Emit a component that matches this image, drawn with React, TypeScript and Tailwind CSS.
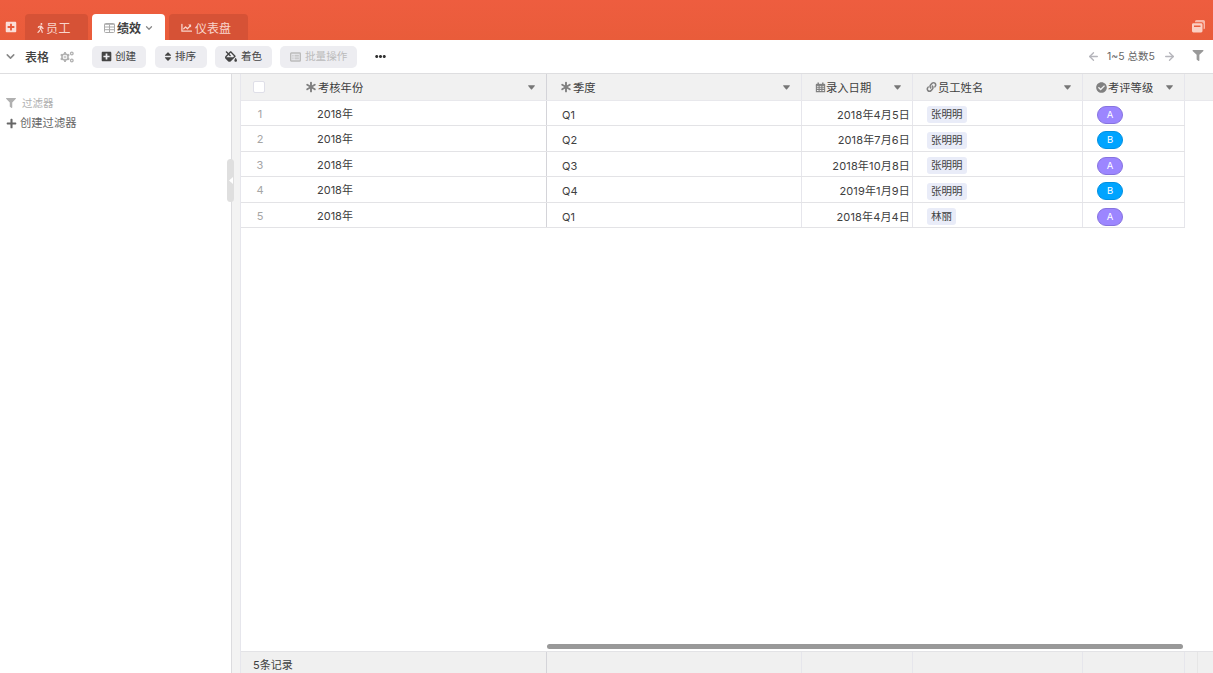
import React from 'react';
import clsx from 'clsx';
import {
  FaPlusSquare,
  FaWalking,
  FaSort,
  FaFillDrip,
  FaEllipsisH,
  FaFilter,
  FaPlus,
  FaLink,
  FaCheckCircle,
} from 'react-icons/fa';
import { FiArrowLeft, FiArrowRight, FiChevronDown } from 'react-icons/fi';

interface Column {
  id: string;
  title: string;
  icon: React.ReactNode;
  width: string;
}

interface ReviewRecord {
  year: string;
  quarter: string;
  date: string;
  employee: string;
  grade: 'A' | 'B';
}

const AsteriskIcon = () => (
  <svg viewBox="0 0 12 12" className="w-3 h-3 mr-px" stroke="currentColor" strokeWidth="1.9" strokeLinecap="round">
    <path d="M6 1.6V10.4M2.2 3.8L9.8 8.2M9.8 3.8L2.2 8.2" />
  </svg>
);

const CalendarIcon = () => (
  <svg viewBox="0 0 12 12" className="w-[11px] h-[11px]" fill="none" stroke="currentColor">
    <path d="M1.5 3.5h9v7h-9zM1 5.8h10M1 8h10M4.5 3v7.5M7.5 3v7.5" strokeWidth="1.2" />
    <path d="M1 3h10" strokeWidth="2" />
    <path d="M3.5 .5v2M8.5 .5v2" strokeWidth="1.6" />
  </svg>
);

const CaretIcon = () => (
  <svg viewBox="0 0 8 5" className="w-[7px] h-[5px] ml-auto mr-[11px] mt-0.5 text-[#777]" fill="currentColor">
    <path d="M.5 0h7q.6.2.2.8L4.4 4.7q-.4.4-.8 0L.3.8Q-.1.2.5 0z" />
  </svg>
);

const TableIcon = () => (
  <svg viewBox="0 0 11 10" className="w-[11px] h-[10px]" fill="none" stroke="currentColor">
    <rect x=".5" y=".5" width="10" height="9" rx="1" />
    <path d="M.5 1.3h10M.5 4h10M.5 6.7h10M5.5 1.5V9" />
  </svg>
);

const ChartIcon = () => (
  <svg viewBox="0 0 12 10" className="w-[11px] h-2.5" fill="none" stroke="currentColor" strokeWidth="1.4">
    <path d="M1 1v7.5h10.5M3 5.8l2-2 2 2 3.4-3.4" strokeLinecap="round" strokeLinejoin="round" />
    <path d="M7.8 1.3h3.2v3.2z" fill="currentColor" stroke="none" />
  </svg>
);

const GearsIcon = () => (
  <svg viewBox="0 0 14 12" className="w-3.5 h-3" fill="none" stroke="currentColor">
    <circle cx="5" cy="6" r="3.1" strokeWidth="1.5" />
    <circle cx="5" cy="6" r="1" strokeWidth=".8" />
    <path d="M5 1v2M5 9V11M.7 3.5l1.7 1M7.6 7.5l1.7 1M.7 8.5l1.7-1M7.6 4.5l1.7-1" strokeWidth="1.8" />
    <circle cx="11.8" cy="2.5" r="1.3" strokeWidth="1.3" />
    <circle cx="11.8" cy="9.5" r="1.3" strokeWidth="1.3" />
  </svg>
);

const ListIcon = () => (
  <svg viewBox="0 0 11 10" className="w-[11px] h-[10px]" fill="none" stroke="currentColor" strokeWidth="1.4">
    <rect x=".7" y="1" width="9.6" height="8" rx=".6" />
    <path d="M2.3 3.3h1.3M4.5 3.3h4.4M2.3 5h1.3M4.5 5h4.4M2.3 6.8h1.3M4.5 6.8h4.4" strokeWidth="1" />
  </svg>
);

const WindowsIcon = () => (
  <svg viewBox="0 0 13 13" className="w-[13px] h-[13px]" fill="currentColor">
    <path d="M4.5 0H11.5Q13 0 13 1.5V8Q13 9.3 11.6 9.3V4.2Q11.6 2.2 9.6 2.2H3V1.5Q3 0 4.5 0z" opacity=".8" />
    <path
      d="M1.4 3.2h7.7q1.4 0 1.4 1.4v6.5q0 1.4-1.4 1.4H1.4Q0 12.5 0 11.1V4.6Q0 3.2 1.4 3.2zM2 5.6v1.3h6.500v-1.300z"
      fillRule="evenodd"
    />
  </svg>
);

const columns: Column[] = [
  { id: 'year', title: '考核年份', icon: <AsteriskIcon />, width: 'w-[306px]' },
  { id: 'quarter', title: '季度', icon: <AsteriskIcon />, width: 'w-[255px]' },
  { id: 'date', title: '录入日期', icon: <CalendarIcon />, width: 'w-[111px]' },
  { id: 'employee', title: '员工姓名', icon: <FaLink className="w-[11px] h-[10px] mr-px" />, width: 'w-[170px]' },
  { id: 'grade', title: '考评等级', icon: <FaCheckCircle className="w-[11px] h-[11px] mr-px" />, width: 'w-[102px]' },
];

const records: ReviewRecord[] = [
  { year: '2018年', quarter: 'Q1', date: '2018年4月5日', employee: '张明明', grade: 'A' },
  { year: '2018年', quarter: 'Q2', date: '2018年7月6日', employee: '张明明', grade: 'B' },
  { year: '2018年', quarter: 'Q3', date: '2018年10月8日', employee: '张明明', grade: 'A' },
  { year: '2018年', quarter: 'Q4', date: '2019年1月9日', employee: '张明明', grade: 'B' },
  { year: '2018年', quarter: 'Q1', date: '2018年4月4日', employee: '林丽', grade: 'A' },
];

const tab = 'flex items-center h-[26px] pt-0.5 rounded-t text-xs';
const toolbarButton = 'flex items-center h-[22px] rounded-[5px] bg-[#ededf1] text-[10.6px] text-[#444]';

const TabBar = () => (
  <header className="flex items-end h-10 shrink-0 bg-linear-to-b from-[#ee5d3f] to-[#e95c3a]">
    <button className="flex items-center h-[27px] w-[25px] pl-[5px] text-white/80">
      <FaPlusSquare className="w-3 h-3" />
    </button>
    <div className={clsx(tab, 'w-[63px] pl-[11px] bg-[#d65236] text-[#f9d5cc]')}>
      <FaWalking className="w-[9px] h-2.5" />
      <span className="ml-px pt-0.5 tracking-[0.4px]">员工</span>
    </div>
    <div className={clsx(tab, 'w-[73px] ml-1 pl-3 bg-white')}>
      <span className="text-[#aaa]"><TableIcon /></span>
      <span className="ml-[2px] pt-0.5 font-bold text-[#404040]">绩效</span>
      <FiChevronDown className="w-2.5 h-2.5 ml-[3px] text-[#888]" strokeWidth={3} />
    </div>
    <div className={clsx(tab, 'w-[79px] ml-1 pl-3 bg-[#d65236] text-[#f9d5cc]')}>
      <ChartIcon />
      <span className="ml-[3px] pt-0.5">仪表盘</span>
    </div>
    <button className="flex items-center h-7 ml-auto pr-2 text-[#fbd0c4]">
      <WindowsIcon />
    </button>
  </header>
);

const Toolbar = () => (
  <div className="flex items-center h-[34px] shrink-0 border-b border-[#dedee0] bg-white">
    <FiChevronDown className="w-[13px] h-[13px] ml-1 text-[#888]" strokeWidth={2.8} />
    <span className="ml-2 pt-0.5 text-xs font-medium text-[#404040]">表格</span>
    <span className="ml-[11px] text-[#b0b0b0]"><GearsIcon /></span>

    <button className={clsx(toolbarButton, 'w-[54px] ml-[18px] pl-[9px]')}>
      <FaPlusSquare className="w-[11px] h-[11px] mr-[3px]" />
      创建
    </button>
    <button className={clsx(toolbarButton, 'w-[52px] ml-[9px] pl-[9px]')}>
      <FaSort className="w-2 h-[11px] mr-[3px]" />
      排序
    </button>
    <button className={clsx(toolbarButton, 'w-[57px] ml-2 pl-2.5')}>
      <FaFillDrip className="w-3 h-[11px] mr-1" />
      着色
    </button>
    <button className={clsx(toolbarButton, 'w-[77px] ml-2 pl-2.5 text-[#bbb]!')}>
      <span className="mr-1"><ListIcon /></span>
      批量操作
    </button>
    <FaEllipsisH className="w-[11px] h-[11px] ml-[18px] text-[#333]" />

    <div className="flex items-center ml-auto text-[#666] text-[10.5px]">
      <FiArrowLeft className="w-[13px] h-[13px] text-[#b5b5bb]" strokeWidth={2.5} />
      <span className="w-[49px] ml-[7px] whitespace-nowrap">1~5 总数5</span>
      <FiArrowRight className="w-[13px] h-[13px] ml-[7px] text-[#b5b5bb]" strokeWidth={2.5} />
      <FaFilter className="w-3 h-[11px] ml-4 mr-[9px] mb-0.5 text-[#999]" />
    </div>
  </div>
);

const Sidebar = () => (
  <aside className="relative w-[232px] shrink-0 pt-[21px] pl-1.5 border-r border-[#dcdcdf]">
    <div className="flex items-center h-4 text-[10.5px] text-[#b0b0b0]">
      <FaFilter className="w-2.5 h-2.5 mr-1.5" />
      <span className="pt-px">过滤器</span>
    </div>
    <button className="flex items-center h-[19px] mt-[3px] text-[11.3px] text-[#666]">
      <FaPlus className="w-[11px] h-[11px] mr-[3px]" />
      创建过滤器
    </button>
    {/* Collapse handle */}
    <button className="absolute top-[85px] -right-[3px] flex items-center justify-center w-[7px] h-[43px] rounded-sm bg-[#dfdfdf] text-white">
      <svg viewBox="0 0 4 7" className="w-1 h-[7px]" fill="currentColor">
        <path d="M4 0v7L0 3.5z" />
      </svg>
    </button>
  </aside>
);

const GradeBadge: React.FC<{ grade: 'A' | 'B' }> = ({ grade }) => (
  <span
    className={clsx(
      'flex items-center justify-center w-[26px] h-[18px] rounded-full border text-[9.5px] text-white',
      grade === 'A' ? 'bg-[#9c86ff] border-[#8673df]' : 'bg-[#00a4ff] border-[#0090e2]'
    )}
  >
    {grade}
  </span>
);

const cell = 'flex items-center shrink-0 border-r border-[#e6e6ec]';

export default function App() {
  return (
    <div className="flex flex-col w-full h-[673px] overflow-hidden bg-white font-[Inter,'Noto_Sans_CJK_SC',sans-serif] text-[#404040]">
      <TabBar />
      <Toolbar />

      <div className="flex flex-1 min-h-0">
        <Sidebar />
        <div className="w-[9px] shrink-0 bg-[#f3f3f3] border-r border-[#e6e6ec]" />

        <main className="flex flex-col flex-1 min-w-0">
          {/* Column headers */}
          <div className="flex h-[26.5px] shrink-0 bg-[#f1f1f1] border-b border-[#e8e8ec] text-[11.3px]">
            {columns.map((column, index) => (
              <div
                key={column.id}
                className={clsx(cell, column.width, index === 0 ? 'border-[#d4d4d9]! pl-3' : 'pl-[13px]')}
              >
                {index === 0 && <span className="w-3 h-3 mr-10 rounded-xs border border-[#dfdfe8] bg-white" />}
                <span className="pt-px text-[#808080]">{column.icon}</span>
                <span className="pt-[3px]">{column.title}</span>
                <CaretIcon />
              </div>
            ))}
          </div>

          {/* Records */}
          {records.map((record, index) => (
            <div key={index} className="flex w-[944px] h-[25.5px] shrink-0 border-b border-[#e3e3e6] text-[11px]">
              <div className={clsx(cell, 'w-[306px] pt-0.5 border-[#d4d4d9]!')}>
                <span className="w-[38px] text-center text-[#a5a5a5]">{index + 1}</span>
                <span className="pl-[38px]">{record.year}</span>
              </div>
              <div className={clsx(cell, 'w-[255px] pl-[15px] pt-1')}>{record.quarter}</div>
              <div className={clsx(cell, 'w-[111px] justify-end pr-0.5 pt-1 tracking-[0.15px]')}>{record.date}</div>
              <div className={clsx(cell, 'w-[170px] pl-3.5 pt-1')}>
                <span className="flex items-center h-[17px] px-1 pt-px rounded-[3px] bg-[#e9ecf8] text-[10.5px]">
                  {record.employee}
                </span>
              </div>
              <div className={clsx(cell, 'w-[102px] pl-3.5 pt-1')}>
                <GradeBadge grade={record.grade} />
              </div>
            </div>
          ))}

          {/* Horizontal scrollbar */}
          <div className="mt-auto mb-0.5 ml-[306px] w-[636px] h-[5px] shrink-0 rounded-full bg-[#999]" />

          {/* Summary footer */}
          <footer className="flex h-[22px] shrink-0 bg-[#f0f0f0] border-t border-[#e3e3e6] text-[11px]">
            {columns.map((column, index) => (
              <div key={column.id} className={clsx(cell, column.width, index === 0 && 'border-[#d4d4d9]!')}>
                {index === 0 && <span className="pl-3 pt-[5px]">{records.length}条记录</span>}
              </div>
            ))}
            <div className="w-[13px] shrink-0 border-r border-[#e6e6e6]" />
          </footer>
        </main>
      </div>
    </div>
  );
}
